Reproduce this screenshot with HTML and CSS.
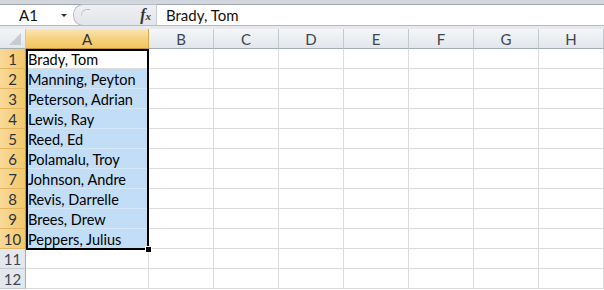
FILE: index.html
```html
<!DOCTYPE html>
<html>
<head>
<meta charset="utf-8">
<link rel="stylesheet" href="styles.css">
</head>
<body>
<div class="top">
  <div class="fbar">
    <div class="namebox"><span class="ref">A1</span><span class="arrow"></span></div>
    <div class="pill"><span class="grip"></span><span class="fx"><i>f</i><i class="x">x</i></span></div>
    <div class="input">Brady, Tom</div>
  </div>
</div>
<div class="sheet">
  <div class="grid">
    <div class="corner"><span class="tri"></span></div>
    <div class="ch sel">A</div>
    <div class="ch">B</div>
    <div class="ch">C</div>
    <div class="ch">D</div>
    <div class="ch">E</div>
    <div class="ch">F</div>
    <div class="ch">G</div>
    <div class="ch">H</div>

    <div class="rh sel">1</div><div class="c active">Brady, Tom</div><div class="c"></div><div class="c"></div><div class="c"></div><div class="c"></div><div class="c"></div><div class="c"></div><div class="c"></div>
    <div class="rh sel">2</div><div class="c hl">Manning, Peyton</div><div class="c"></div><div class="c"></div><div class="c"></div><div class="c"></div><div class="c"></div><div class="c"></div><div class="c"></div>
    <div class="rh sel">3</div><div class="c hl">Peterson, Adrian</div><div class="c"></div><div class="c"></div><div class="c"></div><div class="c"></div><div class="c"></div><div class="c"></div><div class="c"></div>
    <div class="rh sel">4</div><div class="c hl">Lewis, Ray</div><div class="c"></div><div class="c"></div><div class="c"></div><div class="c"></div><div class="c"></div><div class="c"></div><div class="c"></div>
    <div class="rh sel">5</div><div class="c hl">Reed, Ed</div><div class="c"></div><div class="c"></div><div class="c"></div><div class="c"></div><div class="c"></div><div class="c"></div><div class="c"></div>
    <div class="rh sel">6</div><div class="c hl">Polamalu, Troy</div><div class="c"></div><div class="c"></div><div class="c"></div><div class="c"></div><div class="c"></div><div class="c"></div><div class="c"></div>
    <div class="rh sel">7</div><div class="c hl">Johnson, Andre</div><div class="c"></div><div class="c"></div><div class="c"></div><div class="c"></div><div class="c"></div><div class="c"></div><div class="c"></div>
    <div class="rh sel">8</div><div class="c hl">Revis, Darrelle</div><div class="c"></div><div class="c"></div><div class="c"></div><div class="c"></div><div class="c"></div><div class="c"></div><div class="c"></div>
    <div class="rh sel">9</div><div class="c hl">Brees, Drew</div><div class="c"></div><div class="c"></div><div class="c"></div><div class="c"></div><div class="c"></div><div class="c"></div><div class="c"></div>
    <div class="rh sel">10</div><div class="c hl">Peppers, Julius</div><div class="c"></div><div class="c"></div><div class="c"></div><div class="c"></div><div class="c"></div><div class="c"></div><div class="c"></div>
    <div class="rh">11</div><div class="c"></div><div class="c"></div><div class="c"></div><div class="c"></div><div class="c"></div><div class="c"></div><div class="c"></div><div class="c"></div>
    <div class="rh">12</div><div class="c"></div><div class="c"></div><div class="c"></div><div class="c"></div><div class="c"></div><div class="c"></div><div class="c"></div><div class="c"></div>
  </div>
  <div class="selbox"><span class="handle"></span></div>
</div>
</body>
</html>
```
FILE: styles.css
```css
html, body {
  margin: 0;
  padding: 0;
  background: #ffffff;
}
body {
  width: 604px;
  height: 290px;
  overflow: hidden;
  font-family: Lato, "Open Sans", sans-serif;
  font-size: 14.5px;
  color: #000;
}
.top {
  height: 29px;
  box-sizing: border-box;
  padding-top: 4px;
  background: linear-gradient(#cfd4da, #d6dae0 4px, #e7e9ec 26px);
}
.fbar {
  display: flex;
  height: 22px;
  box-sizing: border-box;
  border-top: 1px solid #9ea5ae;
  border-bottom: 1px solid #b3b9c1;
  background: #fff;
}
.namebox {
  width: 72px;
  display: flex;
  align-items: center;
  position: relative;
}
.ref {
  margin-left: 19px;
  font-size: 15px;
  color: #111;
}
.arrow {
  position: absolute;
  left: 61px;
  top: 9px;
  width: 0;
  height: 0;
  border-left: 3px solid transparent;
  border-right: 3px solid transparent;
  border-top: 3px solid #333;
}
.pill {
  width: 84px;
  margin-left: 1px;
  box-sizing: border-box;
  border: 1px solid #b6bcc4;
  border-right: 1px solid #c8ccd2;
  border-radius: 10px 0 0 10px;
  background: linear-gradient(#eef0f3, #e2e5ea);
  display: flex;
  align-items: center;
  position: relative;
  margin-top: -1px;
  margin-bottom: -1px;
}
.grip {
  position: absolute;
  left: 7px;
  top: 4px;
  width: 8px;
  height: 6px;
  border-top: 1px solid #b9bec5;
  border-left: 1px solid #c9cdd2;
  border-radius: 6px 0 0 0;
}
.fx {
  margin-left: auto;
  margin-right: 5px;
  font-family: "Liberation Serif", serif;
  font-weight: bold;
  font-size: 16px;
  color: #333;
}
.fx .x {
  font-size: 11px;
  margin-left: 0;
}
.input {
  flex: 1;
  display: flex;
  align-items: center;
  padding-left: 9px;
  font-size: 15px;
  color: #111;
}
.sheet {
  position: relative;
}
.grid {
  display: grid;
  grid-template-columns: 26px 123px repeat(7, 65px);
  grid-auto-rows: 20px;
}
.grid > div {
  box-sizing: border-box;
  border-right: 1px solid #dadcdd;
  border-bottom: 1px solid #dadcdd;
}
.corner {
  background: linear-gradient(#f2f4f7, #e3e7ec);
  position: relative;
  border-right-color: #c3c9d1 !important;
  border-bottom-color: #a5acb5 !important;
}
.tri {
  position: absolute;
  right: 4px;
  bottom: 3px;
  width: 0;
  height: 0;
  border-left: 12px solid transparent;
  border-bottom: 12px solid #c7ccd3;
}
.ch {
  background: linear-gradient(#f4f6f8, #e2e6eb);
  border-right-color: #c3c9d1 !important;
  border-bottom-color: #a5acb5 !important;
  display: flex;
  align-items: center;
  justify-content: center;
  color: #3f4551;
  font-size: 15px;
  padding-top: 1px;
}
.ch.sel {
  background: linear-gradient(#fae5b4, #f6d27e 50%, #f2c560);
  border-right-color: #d9a847 !important;
  border-bottom-color: #c2923c !important;
  color: #2e3340;
}
.rh {
  background: #e4e8ee;
  border-bottom-color: #c3c9d1 !important;
  border-right-color: #a5acb5 !important;
  display: flex;
  align-items: center;
  justify-content: center;
  color: #3f4551;
  font-size: 15px;
}
.rh.sel {
  background: linear-gradient(90deg, #f9d999, #f3c869);
  border-bottom-color: #e3b560 !important;
  border-right-color: #c2923c !important;
  color: #2e3340;
}
.c {
  display: flex;
  align-items: center;
  padding-left: 2px;
  padding-top: 1px;
  white-space: nowrap;
}
.c.hl {
  background: #c2ddf6;
  border-bottom-color: #d6e7f7 !important;
  border-right-color: #c2ddf6 !important;
}
.selbox {
  position: absolute;
  left: 26px;
  top: 20px;
  width: 123px;
  height: 201px;
  box-sizing: border-box;
  border: 2px solid #000;
  pointer-events: none;
}
.handle {
  position: absolute;
  right: -5px;
  bottom: -5px;
  width: 5px;
  height: 5px;
  background: #000;
  border: 1px solid #fff;
}
```
